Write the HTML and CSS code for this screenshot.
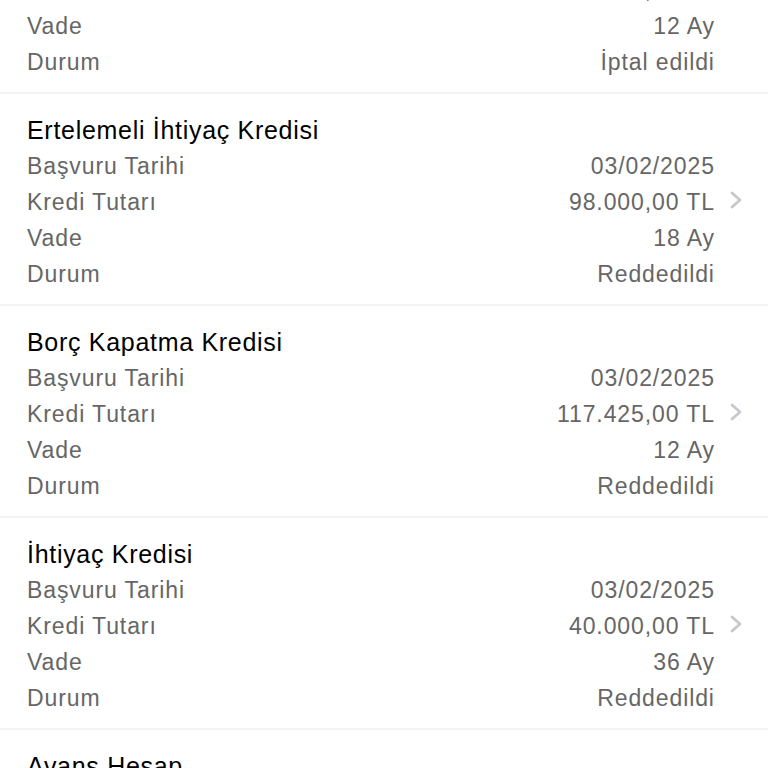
FILE: index.html
```html
<!DOCTYPE html>
<html lang="tr">
<head>
    <meta charset="UTF-8">
    <meta name="viewport" content="width=device-width, initial-scale=1.0">
    <title>Kredi Başvurularım</title>
    <link rel="stylesheet" href="styles.css">
</head>
<body>
    <!-- Başvuru listesi -->
    <div class="loan-list">
        <div class="loan-card">
            <div class="loan-title">Tüketici Kredisi</div>
            <div class="loan-rows">
                <div class="loan-row"><span>Başvuru Tarihi</span><span>03/02/2025</span></div>
                <div class="loan-row"><span>Kredi Tutarı</span><span>50.000,00 TL</span></div>
                <div class="loan-row"><span>Vade</span><span>12 Ay</span></div>
                <div class="loan-row"><span>Durum</span><span>İptal edildi</span></div>
            </div>
        </div>

        <div class="loan-card">
            <div class="loan-title">Ertelemeli İhtiyaç Kredisi</div>
            <div class="loan-rows">
                <div class="loan-row"><span>Başvuru Tarihi</span><span>03/02/2025</span></div>
                <div class="loan-row"><span>Kredi Tutarı</span><span>98.000,00 TL</span></div>
                <div class="loan-row"><span>Vade</span><span>18 Ay</span></div>
                <div class="loan-row"><span>Durum</span><span>Reddedildi</span></div>
            </div>
            <svg class="chevron" width="14" height="18" viewBox="0 0 14 18"><path d="M3 2 L11 9 L3 16" fill="none" stroke="#c8c8cc" stroke-width="2.8" stroke-linecap="round" stroke-linejoin="round"/></svg>
        </div>

        <div class="loan-card">
            <div class="loan-title">Borç Kapatma Kredisi</div>
            <div class="loan-rows">
                <div class="loan-row"><span>Başvuru Tarihi</span><span>03/02/2025</span></div>
                <div class="loan-row"><span>Kredi Tutarı</span><span>117.425,00 TL</span></div>
                <div class="loan-row"><span>Vade</span><span>12 Ay</span></div>
                <div class="loan-row"><span>Durum</span><span>Reddedildi</span></div>
            </div>
            <svg class="chevron" width="14" height="18" viewBox="0 0 14 18"><path d="M3 2 L11 9 L3 16" fill="none" stroke="#c8c8cc" stroke-width="2.8" stroke-linecap="round" stroke-linejoin="round"/></svg>
        </div>

        <div class="loan-card">
            <div class="loan-title">İhtiyaç Kredisi</div>
            <div class="loan-rows">
                <div class="loan-row"><span>Başvuru Tarihi</span><span>03/02/2025</span></div>
                <div class="loan-row"><span>Kredi Tutarı</span><span>40.000,00 TL</span></div>
                <div class="loan-row"><span>Vade</span><span>36 Ay</span></div>
                <div class="loan-row"><span>Durum</span><span>Reddedildi</span></div>
            </div>
            <svg class="chevron" width="14" height="18" viewBox="0 0 14 18"><path d="M3 2 L11 9 L3 16" fill="none" stroke="#c8c8cc" stroke-width="2.8" stroke-linecap="round" stroke-linejoin="round"/></svg>
        </div>

        <div class="loan-card">
            <div class="loan-title">Avans Hesap</div>
        </div>
    </div>
</body>
</html>
```
FILE: styles.css
```css
/* Reset */
* {
    margin: 0;
    padding: 0;
    box-sizing: border-box;
}

body {
    font-family: 'Liberation Sans', Arial, sans-serif;
    background-color: #fff;
    overflow: hidden;
}

/* List */
.loan-list {
    margin-top: -118px;
}

.loan-card {
    position: relative;
    padding: 18px 54px 12px 27px;
    border-bottom: 2px solid #f3f3f3;
}

.loan-title {
    font-size: 25px;
    line-height: 36px;
    letter-spacing: 0.7px;
    color: #000;
}

.loan-row {
    display: flex;
    justify-content: space-between;
    font-size: 23px;
    line-height: 36px;
    letter-spacing: 0.9px;
    color: #666;
}

.loan-row span:last-child {
    margin-right: -0.9px;
}

/* Chevron next to Kredi Tutarı */
.chevron {
    position: absolute;
    right: 25px;
    top: 97px;
}
```
